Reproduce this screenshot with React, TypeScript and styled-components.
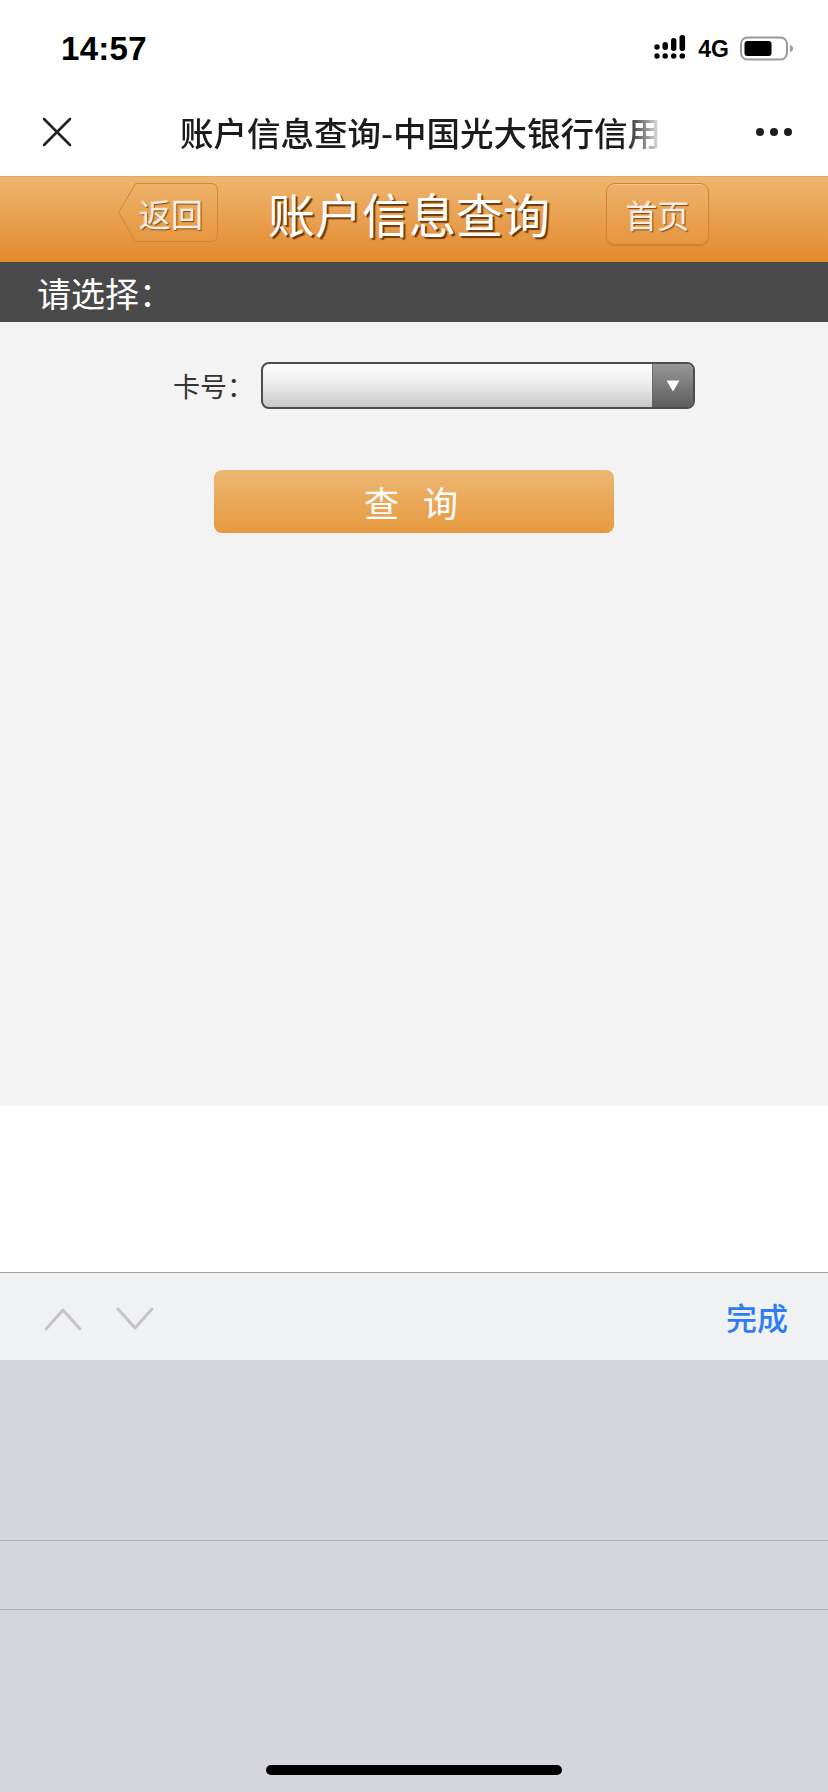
import React from "react";
import styled, { createGlobalStyle } from "styled-components";

const GlobalStyle = createGlobalStyle`
  html, body { margin: 0; padding: 0; background: #ffffff; }
  body { font-family: "Noto Sans CJK SC", "Noto Sans", sans-serif; }
  * { box-sizing: border-box; }
`;

const CJK = `"Noto Sans CJK SC", "Noto Sans", sans-serif`;

const Phone = styled.div`
  width: 828px;
  height: 1792px;
  display: flex;
  flex-direction: column;
  overflow: hidden;
  background: #ffffff;
`;

/* ---------- status bar ---------- */
const StatusBar = styled.div`
  height: 88px;
  flex: none;
  display: flex;
  align-items: center;
  justify-content: space-between;
  padding: 10px 34px 0 61px;
`;

const Clock = styled.span`
  font-family: "Liberation Sans", Arial, sans-serif;
  font-weight: 700;
  font-size: 33px;
  color: #000;
  letter-spacing: 0.3px;
`;

const StatusRight = styled.div`
  display: flex;
  align-items: center;
  gap: 10px;
`;

const NetLabel = styled.span`
  font-family: "Liberation Sans", Arial, sans-serif;
  font-weight: 700;
  font-size: 23px;
  color: #000;
  margin-right: 1px;
`;

/* ---------- nav bar ---------- */
const NavBar = styled.div`
  height: 88px;
  flex: none;
  display: flex;
  align-items: center;
  padding: 0 36px 0 42px;
`;

const NavTitle = styled.div`
  margin-left: 108px;
  width: 484px;
  overflow: hidden;
  white-space: nowrap;
  font-family: ${CJK};
  font-weight: 500;
  font-size: 33.5px;
  color: #1b1b1b;
  line-height: 1.2;
  -webkit-mask-image: linear-gradient(to right, #000 0, #000 446px, transparent 484px);
  mask-image: linear-gradient(to right, #000 0, #000 446px, transparent 484px);
`;

const MoreButton = styled.div`
  margin-left: auto;
  display: flex;
  gap: 6px;
`;

const Dot = styled.span`
  width: 8px;
  height: 8px;
  border-radius: 50%;
  background: #1e1e1e;
`;

/* ---------- orange header ---------- */
const Header = styled.div`
  height: 86px;
  flex: none;
  display: flex;
  align-items: flex-start;
  padding: 6px 0 0 118px;
  background: linear-gradient(to bottom, #edb66e 0%, #e9a152 45%, #e38a2d 100%);
  border-top: 1px solid #e3a865;
`;

const BackButton = styled.div`
  position: relative;
  width: 100px;
  height: 59px;
  display: flex;
  align-items: center;
  padding-left: 21px;
`;

const BackShape = styled.svg`
  position: absolute;
  inset: 0;
`;

const ButtonText = styled.span`
  position: relative;
  font-family: ${CJK};
  font-size: 32px;
  line-height: 1;
  color: #f8efe4;
  text-shadow: 1px 1px 1px rgba(110, 55, 8, 0.85), -1px -1px 0 rgba(255, 240, 220, 0.25);
`;

const HeaderTitle = styled.h1`
  margin: 0 0 0 50px;
  height: 59px;
  display: flex;
  align-items: center;
  font-family: ${CJK};
  font-weight: 400;
  font-size: 47px;
  line-height: 1;
  color: #ffffff;
  text-shadow: 2px 2px 1px rgba(92, 45, 5, 0.9);
`;

const HomeButton = styled.div`
  margin-left: 56px;
  width: 103px;
  height: 62px;
  display: flex;
  align-items: center;
  justify-content: center;
  border-radius: 9px;
  border: 1px solid #d5822c;
  background: linear-gradient(to bottom, #eeb06a, #e6963f);
  box-shadow: inset 0 1px 0 rgba(255, 225, 180, 0.45), 0 1px 1px rgba(200, 110, 30, 0.5);
`;

/* ---------- section bar ---------- */
const SectionBar = styled.div`
  height: 60px;
  flex: none;
  display: flex;
  align-items: center;
  padding-left: 37px;
  background: #4a4a4a;
  font-family: ${CJK};
  font-size: 34px;
  color: #ffffff;
`;

/* ---------- content ---------- */
const Content = styled.div`
  height: 784px;
  flex: none;
  background: #f3f3f3;
  display: flex;
  flex-direction: column;
  padding-top: 40px;
`;

const FieldRow = styled.div`
  display: flex;
  align-items: center;
  padding-left: 173px;
`;

const FieldLabel = styled.label`
  width: 88px;
  font-family: ${CJK};
  font-size: 27px;
  color: #333333;
`;

const SelectBox = styled.div`
  width: 434px;
  height: 47px;
  display: flex;
  border: 2px solid #4d4d4d;
  border-radius: 8px;
  overflow: hidden;
  background: linear-gradient(to bottom, #ffffff 0%, #ececec 45%, #c9c9c9 100%);
`;

const SelectValue = styled.div`
  flex: 1;
`;

const SelectArrow = styled.div`
  width: 41px;
  display: flex;
  align-items: center;
  justify-content: center;
  border-left: 1px solid #6a6a6a;
  background: linear-gradient(to bottom, #979797, #5d5d5d);
`;

const QueryButton = styled.button`
  align-self: center;
  margin-top: 61px;
  width: 400px;
  height: 63px;
  border: none;
  border-radius: 8px;
  background: linear-gradient(to bottom, #edb874 0%, #e9a656 55%, #e79a3f 100%);
  font-family: ${CJK};
  font-size: 35px;
  letter-spacing: 8px;
  padding-left: 8px;
  color: #ffffff;
`;

const Blank = styled.div`
  height: 166px;
  flex: none;
  background: #ffffff;
`;

/* ---------- keyboard accessory ---------- */
const Toolbar = styled.div`
  height: 88px;
  flex: none;
  display: flex;
  align-items: center;
  padding: 0 40px 0 44px;
  border-top: 1px solid #a3a3a7;
  background: #f0f1f3;
`;

const NavArrows = styled.div`
  display: flex;
  gap: 34px;
  padding-top: 4px;
`;

const DoneButton = styled.span`
  margin-left: auto;
  font-family: ${CJK};
  font-weight: 500;
  font-size: 31px;
  color: #2f7bf5;
`;

const Picker = styled.div`
  flex: 1;
  display: flex;
  flex-direction: column;
  align-items: center;
  background: #d5d6db;
`;

const SelectionBand = styled.div`
  align-self: stretch;
  margin-top: 180px;
  height: 70px;
  border-top: 1px solid #b3b4b8;
  border-bottom: 1px solid #b3b4b8;
`;

const HomeIndicator = styled.div`
  margin-top: auto;
  margin-bottom: 17px;
  width: 296px;
  height: 10px;
  border-radius: 5px;
  background: #000000;
`;

/* ---------- icons ---------- */
const SignalIcon = () => (
  <svg width="34" height="28" viewBox="0 0 34 28">
    <g fill="#000">
      <circle cx="3" cy="12" r="2.7" />
      <circle cx="3" cy="21" r="2.7" />
      <rect x="8.5" y="7" width="5.4" height="8" rx="2.7" />
      <circle cx="11.2" cy="21" r="2.7" />
      <rect x="17" y="3" width="5.4" height="13" rx="2.7" />
      <circle cx="19.7" cy="21" r="2.7" />
      <rect x="25.5" y="0" width="5.6" height="16" rx="2.8" />
      <circle cx="28.3" cy="21" r="2.8" />
    </g>
  </svg>
);

const BatteryIcon = () => (
  <svg width="54" height="26" viewBox="0 0 54 26">
    <rect x="1" y="1.5" width="46" height="22" rx="6.5" fill="none" stroke="#9a9a9a" strokeWidth="2" />
    <rect x="4.5" y="5" width="27" height="15" rx="3" fill="#000" />
    <path d="M50 9 Q53 9.5 53 12.5 Q53 15.5 50 16 Z" fill="#9a9a9a" />
  </svg>
);

const CloseIcon = () => (
  <svg width="30" height="30" viewBox="0 0 30 30">
    <path d="M2 2 L28 28 M28 2 L2 28" stroke="#222" strokeWidth="2.6" strokeLinecap="round" />
  </svg>
);

const Chevron = ({ up }: { up?: boolean }) => (
  <svg width="38" height="24" viewBox="0 0 38 24">
    <path
      d={up ? "M2 22 L19 3 L36 22" : "M2 2 L19 21 L36 2"}
      fill="none"
      stroke="#c4c4c6"
      strokeWidth="3"
      strokeLinecap="round"
      strokeLinejoin="round"
    />
  </svg>
);

const DownTriangle = () => (
  <svg width="14" height="12" viewBox="0 0 14 12">
    <path d="M0.5 0.5 H13.5 L7 11.5 Z" fill="#ffffff" />
  </svg>
);

export default function App() {
  return (
    <Phone>
      <GlobalStyle />
      <StatusBar>
        <Clock>14:57</Clock>
        <StatusRight>
          <SignalIcon />
          <NetLabel>4G</NetLabel>
          <BatteryIcon />
        </StatusRight>
      </StatusBar>

      <NavBar>
        <CloseIcon />
        <NavTitle>账户信息查询-中国光大银行信用卡</NavTitle>
        <MoreButton>
          <Dot />
          <Dot />
          <Dot />
        </MoreButton>
      </NavBar>

      <Header>
        <BackButton>
          <BackShape width="100" height="59" viewBox="0 0 100 59">
            <defs>
              <linearGradient id="backFill" x1="0" y1="0" x2="0" y2="1">
                <stop offset="0" stopColor="#edb26a" />
                <stop offset="1" stopColor="#e6963f" />
              </linearGradient>
            </defs>
            <path
              d="M17.5 0.5 H92.5 Q99.5 0.5 99.5 7.5 V51.5 Q99.5 58.5 92.5 58.5 H17.5 L0.8 29.5 Z"
              fill="url(#backFill)"
              stroke="#d5842f"
              strokeWidth="1"
            />
          </BackShape>
          <ButtonText>返回</ButtonText>
        </BackButton>
        <HeaderTitle>账户信息查询</HeaderTitle>
        <HomeButton>
          <ButtonText>首页</ButtonText>
        </HomeButton>
      </Header>

      <SectionBar>请选择：</SectionBar>

      <Content>
        <FieldRow>
          <FieldLabel>卡号：</FieldLabel>
          <SelectBox>
            <SelectValue />
            <SelectArrow>
              <DownTriangle />
            </SelectArrow>
          </SelectBox>
        </FieldRow>
        <QueryButton>查 询</QueryButton>
      </Content>

      <Blank />

      <Toolbar>
        <NavArrows>
          <Chevron up />
          <Chevron />
        </NavArrows>
        <DoneButton>完成</DoneButton>
      </Toolbar>

      <Picker>
        <SelectionBand />
        <HomeIndicator />
      </Picker>
    </Phone>
  );
}
